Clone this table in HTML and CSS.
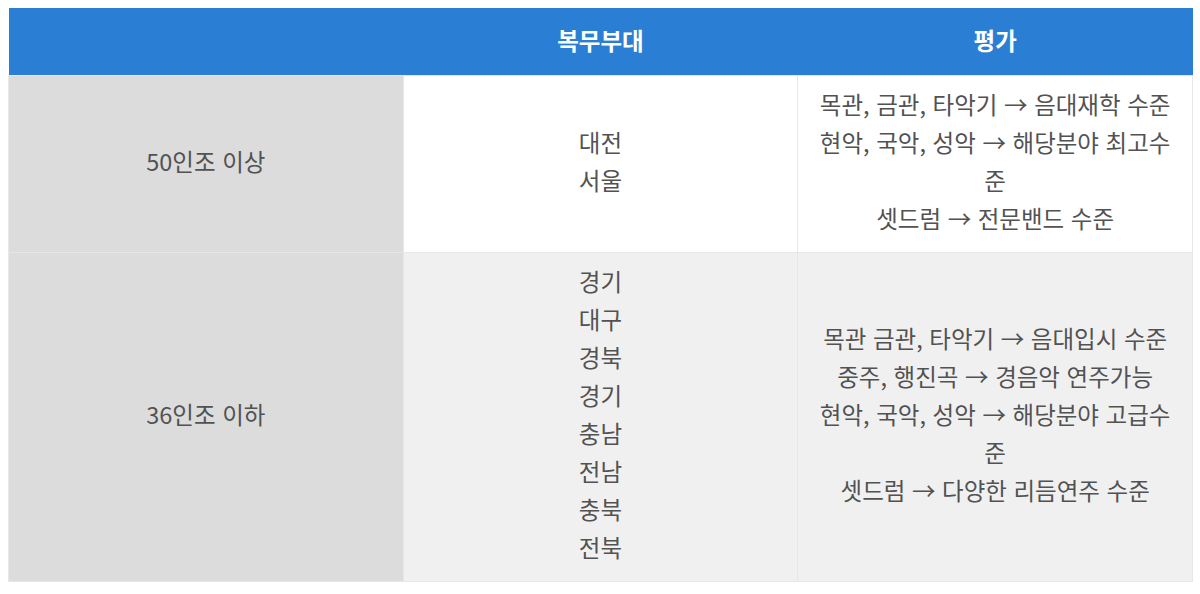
FILE: index.html
```html
<!DOCTYPE html>
<html lang="ko">
<head>
<meta charset="utf-8">
<link rel="stylesheet" href="styles.css">
</head>
<body>
<table class="grid">
  <colgroup><col class="c"><col class="c"><col class="c"></colgroup>
  <thead>
    <tr class="head">
      <th></th>
      <th>복무부대</th>
      <th>평가</th>
    </tr>
  </thead>
  <tbody>
    <tr class="row odd">
      <td class="label">50인조 이상</td>
      <td>대전<br>서울</td>
      <td>목관, 금관, 타악기 → 음대재학 수준<br>현악, 국악, 성악 → 해당분야 최고수준<br>셋드럼 → 전문밴드 수준</td>
    </tr>
    <tr class="row even">
      <td class="label">36인조 이하</td>
      <td>경기<br>대구<br>경북<br>경기<br>충남<br>전남<br>충북<br>전북</td>
      <td>목관 금관, 타악기 → 음대입시 수준<br>중주, 행진곡 → 경음악 연주가능<br>현악, 국악, 성악 → 해당분야 고급수준<br>셋드럼 → 다양한 리듬연주 수준</td>
    </tr>
  </tbody>
</table>
</body>
</html>
```
FILE: styles.css
```css
html, body {
  margin: 0;
  background: #ffffff;
}
body {
  padding: 8px 7px 8px 8px;
  font-family: "Noto Sans CJK KR", "Noto Sans", sans-serif;
  color: #525252;
}
.grid {
  width: 100%;
  border-collapse: collapse;
  table-layout: fixed;
  font-size: 23.5px;
  line-height: 38px;
  text-align: center;
}
.head th {
  background: #2a7fd4;
  color: #ffffff;
  font-weight: bold;
  height: 67px;
  padding: 0 0 2px 0;
  box-sizing: border-box;
  vertical-align: middle;
}
.row td {
  padding: 9px 14px 15px 14px;
  vertical-align: middle;
  border: 1px solid #e7e7e7;
}
.row.odd td { background: #ffffff; }
.row.even td { background: #f0f0f0; }
.row td.label { background: #dcdcdc; }
```
